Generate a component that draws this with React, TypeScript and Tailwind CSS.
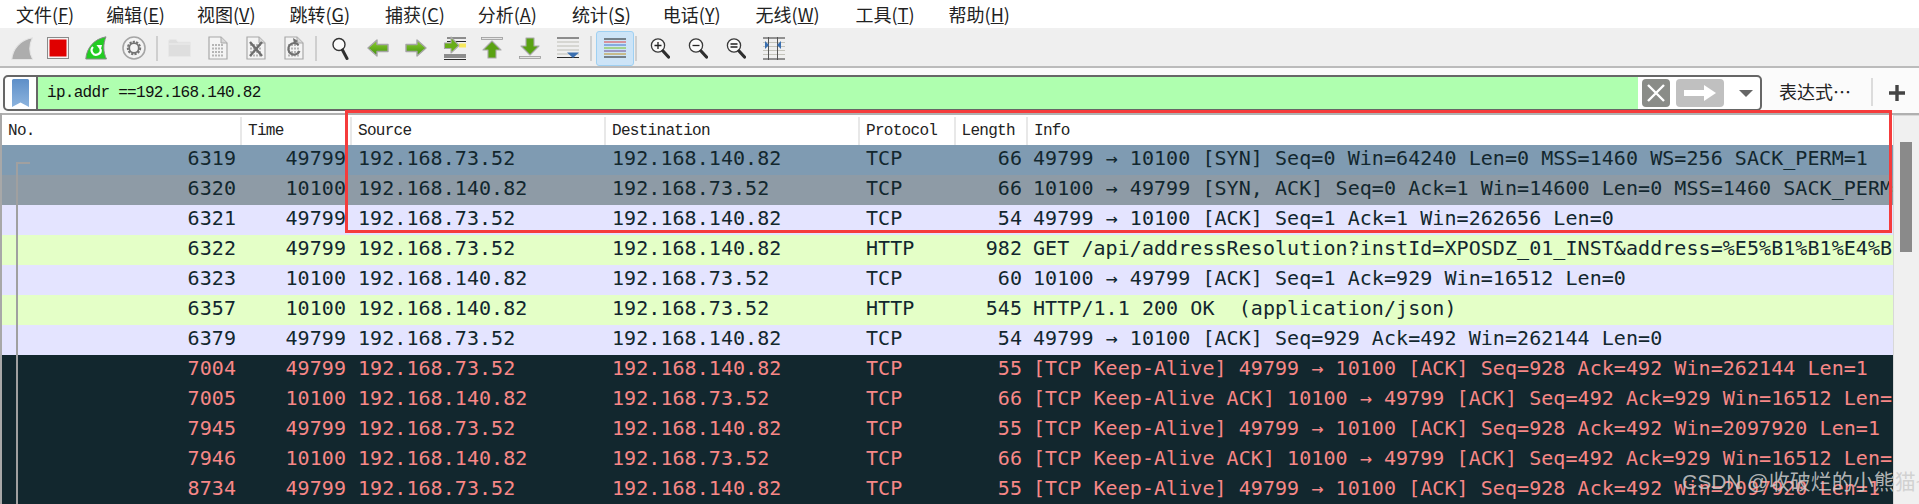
import React from "react";

const MENU: [string, string, string][] = [
  ["文件", "F", "ml-[16px]"],
  ["编辑", "E", "ml-[32px]"],
  ["视图", "V", "ml-[32px]"],
  ["跳转", "G", "ml-[34px]"],
  ["捕获", "C", "ml-[35px]"],
  ["分析", "A", "ml-[33px]"],
  ["统计", "S", "ml-[35px]"],
  ["电话", "Y", "ml-[32px]"],
  ["无线", "W", "ml-[35px]"],
  ["工具", "T", "ml-[36px]"],
  ["帮助", "H", "ml-[34px]"],
];

const A = "192.168.73.52";
const B = "192.168.140.82";
type Row = [number, number, string, string, string, number, string, string];
const S1 = "bg-[#7f9bb2] text-[#12272e]";
const S2 = "bg-[#8e9ba6] text-[#12272e]";
const T = "bg-[#e4e4ff] text-[#12272e]";
const H = "bg-[#e4ffc7] text-[#12272e]";
const D = "bg-[#12272e] text-[#f78787]";
const ROWS: Row[] = [
  [6319, 49799, A, B, "TCP", 66, "49799 → 10100 [SYN] Seq=0 Win=64240 Len=0 MSS=1460 WS=256 SACK_PERM=1", S1],
  [6320, 10100, B, A, "TCP", 66, "10100 → 49799 [SYN, ACK] Seq=0 Ack=1 Win=14600 Len=0 MSS=1460 SACK_PERM=1", S2],
  [6321, 49799, A, B, "TCP", 54, "49799 → 10100 [ACK] Seq=1 Ack=1 Win=262656 Len=0", T],
  [6322, 49799, A, B, "HTTP", 982, "GET /api/addressResolution?instId=XPOSDZ_01_INST&address=%E5%B1%B1%E4%B8%9C", H],
  [6323, 10100, B, A, "TCP", 60, "10100 → 49799 [ACK] Seq=1 Ack=929 Win=16512 Len=0", T],
  [6357, 10100, B, A, "HTTP", 545, "HTTP/1.1 200 OK  (application/json)", H],
  [6379, 49799, A, B, "TCP", 54, "49799 → 10100 [ACK] Seq=929 Ack=492 Win=262144 Len=0", T],
  [7004, 49799, A, B, "TCP", 55, "[TCP Keep-Alive] 49799 → 10100 [ACK] Seq=928 Ack=492 Win=262144 Len=1", D],
  [7005, 10100, B, A, "TCP", 66, "[TCP Keep-Alive ACK] 10100 → 49799 [ACK] Seq=492 Ack=929 Win=16512 Len=0", D],
  [7945, 49799, A, B, "TCP", 55, "[TCP Keep-Alive] 49799 → 10100 [ACK] Seq=928 Ack=492 Win=2097920 Len=1", D],
  [7946, 10100, B, A, "TCP", 66, "[TCP Keep-Alive ACK] 10100 → 49799 [ACK] Seq=492 Ack=929 Win=16512 Len=0", D],
  [8734, 49799, A, B, "TCP", 55, "[TCP Keep-Alive] 49799 → 10100 [ACK] Seq=928 Ack=492 Win=2097920 Len=1", D],
];

const COLS = "grid grid-cols-[240px_110px_254px_254px_95.5px_72.5px_1fr]";

const Sep = ({ c }: { c: string }) => <div className={`${c} w-[2px] h-[25px] bg-[#cfcfcf] shrink-0`} />;

const Page = ({ children }: { children?: React.ReactNode }) => (
  <svg width="20" height="24" viewBox="0 0 20 24" className="shrink-0">
    <path d="M1 1H13L19 7V23H1Z" fill="#f4f4f4" stroke="#a8a8a8" strokeWidth="1.2" />
    <path d="M13 1V7H19" fill="#d8d8d8" stroke="#a8a8a8" strokeWidth="1" />
    {[9, 12.5, 16, 19.5].map((y) => (
      <path key={y} d={`M4 ${y}H16`} stroke="#b5b5b5" strokeWidth="1.8" strokeDasharray="2 1" />
    ))}
    {children}
  </svg>
);

const Arrow = ({ dir, id }: { dir: "l" | "r"; id: string }) => (
  <svg width="22" height="18" viewBox="0 0 22 18" className="shrink-0">
    <defs>
      <linearGradient id={id} x1="0" y1="0" x2="0" y2="1">
        <stop offset="0" stopColor="#8fd030" />
        <stop offset="1" stopColor="#3f8f0c" />
      </linearGradient>
    </defs>
    <path
      d={dir === "l" ? "M1 9L10 1V5.5H21V12.5H10V17Z" : "M21 9L12 1V5.5H1V12.5H12V17Z"}
      fill={`url(#${id})`}
      stroke="#a5a5a5"
      strokeWidth="1.4"
      strokeLinejoin="round"
    />
  </svg>
);

const Mag = ({ sign }: { sign?: "+" | "-" | "=" }) => (
  <svg width="20" height="22" viewBox="0 0 20 22" className="shrink-0">
    <circle cx="8" cy="8.5" r="6.6" fill="#fafafa" stroke="#3a3a3a" strokeWidth="1.3" />
    <path d="M13 14L18.5 20" stroke="#2e2e2e" strokeWidth="3.2" strokeLinecap="round" />
    {sign === "+" && <path d="M4.5 8.5H11.5M8 5V12" stroke="#222" strokeWidth="1.3" />}
    {sign === "-" && <path d="M4.5 8.5H11.5" stroke="#222" strokeWidth="1.3" />}
    {sign === "=" && <path d="M4.5 7H11.5M4.5 10H11.5" stroke="#222" strokeWidth="1.3" />}
  </svg>
);

const Toolbar = () => (
  <div className="h-[36px] bg-[#efefef] flex items-center shrink-0 relative">
    {/* shark */}
    <svg width="22" height="23" viewBox="0 0 22 23" className="ml-[11px] shrink-0">
      <path d="M0.8 22.5C1.5 12 9 3 21.5 0.8C18 8 18 16 21.8 22.5Z" fill="#adadad" stroke="#e4e4e4" strokeWidth="1.1" />
    </svg>
    {/* stop */}
    <svg width="22" height="22" viewBox="0 0 22 22" className="ml-[14px] shrink-0">
      <rect x="0.5" y="0.5" width="21" height="21" fill="#f4f4f4" stroke="#8a8a8a" />
      <rect x="2.5" y="2.5" width="17" height="17" fill="#e00000" />
    </svg>
    {/* restart */}
    <svg width="22" height="24" viewBox="0 0 22 24" className="ml-[16px] shrink-0">
      <path d="M0.8 23C1.5 12 9 3 21 0.8C18 8 18 16 21.5 23Z" fill="#22cc22" stroke="#8a8a8a" strokeWidth="1" />
      <path d="M15.5 13A4.5 4.5 0 1 1 8 11" fill="none" stroke="#fff" strokeWidth="2.2" />
      <path d="M11.5 9L17 9L15.5 14.5Z" fill="#fff" />
    </svg>
    {/* gear */}
    <svg width="24" height="24" viewBox="0 0 24 24" className="ml-[15px] shrink-0">
      <circle cx="12" cy="12" r="11" fill="#f4f4f4" stroke="#a5a5a5" strokeWidth="1.6" />
      <circle cx="12" cy="12" r="6.2" fill="none" stroke="#737373" strokeWidth="2" strokeDasharray="2.2 1.2" />
      <circle cx="12" cy="12" r="4.8" fill="none" stroke="#737373" strokeWidth="1.8" />
    </svg>
    <Sep c="ml-[10px]" />
    {/* folder */}
    <svg width="23" height="18" viewBox="0 0 23 18" className="ml-[10px] shrink-0">
      <path d="M0.5 2.5Q0.5 0.5 2.5 0.5H8L10 3H22.5V17.5H0.5Z" fill="#dedede" stroke="#e8e8e8" />
      <path d="M1 5H22" stroke="#eeeeee" />
    </svg>
    <div className="ml-[17px] shrink-0 flex"><Page /></div>
    <div className="ml-[18px] shrink-0 flex">
      <Page>
        <path d="M4 6L16 20M16 6L4 20" stroke="#6e6e6e" strokeWidth="2.4" />
      </Page>
    </div>
    <div className="ml-[18px] shrink-0 flex">
      <Page>
        <path d="M14.5 9A5.8 5.8 0 1 0 15.5 15" fill="none" stroke="#707070" strokeWidth="2.2" />
        <path d="M9 2L14 5L10 8Z" fill="#707070" />
      </Page>
    </div>
    <Sep c="ml-[11px]" />
    {/* search */}
    <svg width="17" height="23" viewBox="0 0 17 23" className="ml-[15px] shrink-0">
      <circle cx="7" cy="7.5" r="6" fill="#fbfbfb" stroke="#333" strokeWidth="1.4" />
      <path d="M10.5 13L15 21.5" stroke="#2e2e2e" strokeWidth="3" strokeLinecap="round" />
    </svg>
    <div className="ml-[18px] shrink-0 flex"><Arrow dir="l" id="a1" /></div>
    <div className="ml-[16px] shrink-0 flex"><Arrow dir="r" id="a2" /></div>
    {/* go to packet */}
    <svg width="24" height="24" viewBox="0 0 24 24" className="ml-[16px] shrink-0">
      <path d="M4 2H23M4 5.5H23M1 19H23M1 21H23M1 23.5H23" stroke="#2a2a2a" strokeWidth="1" />
      <rect x="16" y="7.5" width="7" height="4" fill="#f7e85c" />
      <path d="M1.5 7H8V1L16 9.5L8 17V12.5H1.5Z" fill="#68ae18" stroke="#a9a9a9" strokeWidth="1.1" strokeLinejoin="round" />
    </svg>
    {/* first */}
    <svg width="22" height="22" viewBox="0 0 22 22" className="ml-[14px] shrink-0">
      <rect x="0.5" y="0.5" width="21" height="2" fill="#e4e4e4" stroke="#9a9a9a" strokeWidth="0.8" />
      <path d="M11 4L20 13H15V21H7V13H2Z" fill="#5aa213" stroke="#a9a9a9" strokeWidth="1.1" strokeLinejoin="round" />
    </svg>
    {/* last */}
    <svg width="22" height="22" viewBox="0 0 22 22" className="ml-[16px] shrink-0">
      <rect x="0.5" y="19.5" width="21" height="2" fill="#e4e4e4" stroke="#9a9a9a" strokeWidth="0.8" />
      <path d="M11 18L20 9H15V1H7V9H2Z" fill="#5aa213" stroke="#a9a9a9" strokeWidth="1.1" strokeLinejoin="round" />
    </svg>
    {/* autoscroll */}
    <svg width="22" height="22" viewBox="0 0 22 22" className="ml-[16px] shrink-0">
      <path d="M0 1H22M0 20.5H22" stroke="#2a2a2a" strokeWidth="1" />
      <path d="M0 5H22M0 9H22M0 13H22M0 17H22" stroke="#bdbdb5" strokeWidth="1" />
      <path d="M10 15.5H22L16 21Z" fill="#3a6fb0" />
    </svg>
    <Sep c="ml-[11px]" />
    {/* colorize */}
    <div className="ml-[4px] w-[38px] h-[35px] bg-[#cde4f7] border border-[#9fd0f2] rounded-[3px] flex items-center justify-center shrink-0">
      <svg width="22" height="22" viewBox="0 0 22 22">
        <path d="M0 2H22" stroke="#1c1c1c" strokeWidth="1" />
        <path d="M0 5H22" stroke="#e04040" strokeWidth="1" />
        <path d="M0 8H22" stroke="#4070c8" strokeWidth="1" />
        <path d="M0 11H22" stroke="#7ac020" strokeWidth="1" />
        <path d="M0 14H22" stroke="#6a4a90" strokeWidth="1" />
        <path d="M0 17H22" stroke="#c09020" strokeWidth="1" />
        <path d="M0 20H22" stroke="#1c1c1c" strokeWidth="1" />
      </svg>
    </div>
    <Sep c="ml-[1px]" />
    <div className="ml-[13px] shrink-0 flex"><Mag sign="+" /></div>
    <div className="ml-[18px] shrink-0 flex"><Mag sign="-" /></div>
    <div className="ml-[18px] shrink-0 flex"><Mag sign="=" /></div>
    {/* resize columns */}
    <svg width="22" height="23" viewBox="0 0 22 23" className="ml-[17px] shrink-0">
      <path d="M0 1H22M0 22H22" stroke="#333" strokeWidth="1" />
      <path d="M0 5.5H22M0 9.5H22M0 13.5H22M0 17.5H22" stroke="#c4c4bc" strokeWidth="1" />
      <path d="M5.5 0V23M14.5 0V23" stroke="#555" strokeWidth="1" />
      <path d="M2 4L6 8L2 12Z" fill="#3a6fb0" />
      <path d="M18 4L14 8L18 12Z" fill="#3a6fb0" />
    </svg>
  </div>
);

const FilterBar = () => (
  <div className="h-[43px] bg-[#fbfbfb] flex items-start pt-[5px] pl-[3px] shrink-0">
    <div className="w-[1759px] h-[36px] rounded-[5px] border-2 border-[#666] flex overflow-hidden bg-white">
      <div className="w-[33px] border-r-2 border-[#666] flex items-center justify-center shrink-0">
        <svg width="17" height="28" viewBox="0 0 17 28">
          <defs>
            <linearGradient id="bm" x1="0" y1="0" x2="0" y2="1">
              <stop offset="0" stopColor="#5e8fc8" />
              <stop offset="1" stopColor="#8db4de" />
            </linearGradient>
          </defs>
          <path d="M1.5 0H15.5Q17 0 17 1.5V28L8.5 23.5L0 28V1.5Q0 0 1.5 0Z" fill="url(#bm)" />
        </svg>
      </div>
      <div className="w-[1600px] bg-[#afffaf] flex items-center pl-[9px] text-[16px] tracking-[-0.7px] text-[#111] [font-family:'Liberation_Mono',monospace] shrink-0">
        ip.addr ==192.168.140.82
      </div>
      <div className="flex items-center flex-1 pl-[4px]">
        <div className="w-[28px] h-[28px] rounded-[4px] bg-[#8a8c88] flex items-center justify-center shrink-0">
          <svg width="20" height="20" viewBox="0 0 20 20">
            <path d="M2 2L18 18M18 2L2 18" stroke="#fff" strokeWidth="2.4" />
          </svg>
        </div>
        <div className="ml-[6px] w-[48px] h-[28px] rounded-[4px] bg-[#c0c0c0] flex items-center justify-center shrink-0">
          <svg width="34" height="18" viewBox="0 0 34 18">
            <path d="M1 6H21V1L33 9L21 17V12H1Z" fill="#fff" />
          </svg>
        </div>
        <div className="ml-[15px] w-0 h-0 border-x-[7px] border-x-transparent border-t-[7px] border-t-[#666] shrink-0" />
      </div>
    </div>
    <div className="ml-[17px] mt-[2px] text-[18px] text-[#222] leading-[28px] [font-family:'Noto_Sans_CJK_SC',sans-serif] whitespace-nowrap">表达式…</div>
    <div className="ml-[20px] mt-[3px] w-[2px] h-[28px] bg-[#dcdcdc]" />
    <svg width="16" height="16" viewBox="0 0 16 16" className="ml-[16px] mt-[10px]">
      <path d="M8 0V16M0 8H16" stroke="#444" strokeWidth="3.4" />
    </svg>
  </div>
);

const HEAD = ["No.", "Time", "Source", "Destination", "Protocol", "Length", "Info"];

export default function App() {
  return (
    <div className="w-[1919px] h-[504px] bg-white overflow-hidden relative flex flex-col">
      <div className="h-[28px] flex items-center text-[18px] text-[#222] [font-family:'Noto_Sans_CJK_SC',sans-serif] whitespace-nowrap shrink-0">
        {MENU.map(([t, k, c]) => (
          <span key={k} className={c}>
            {t}(<span className="underline underline-offset-1">{k}</span>)
          </span>
        ))}
      </div>
      <div className="h-[2px] bg-[#f0f0f0] shrink-0" />
      <Toolbar />
      <div className="h-[2px] bg-[#bbbbbb] shrink-0" />
      <div className="h-[2px] bg-[#fbfbfb] shrink-0" />
      <FilterBar />
      <div className="h-[2px] bg-[#b0b0b0] shrink-0" />
      <div className="flex flex-1 min-h-0 pl-[2px] relative">
        <div className="flex-1 min-w-0 flex flex-col">
          <div className={`${COLS} h-[30px] bg-white text-[16px] tracking-[-0.7px] text-[#222] pt-[2px] [font-family:'Liberation_Mono',monospace] shrink-0`}>
            {HEAD.map((h, i) => (
              <div key={h} className={`flex items-center pl-[6px] ${i < 6 ? "border-r-2 border-[#e8e8e8]" : ""}`}>{h}</div>
            ))}
          </div>
          {ROWS.map((r) => (
            <div key={r[0]} className={`${COLS} h-[30px] shrink-0 items-center text-[20px] tracking-[0.06px] leading-[26px] pb-[4px] whitespace-pre [font-family:'DejaVu_Sans_Mono',monospace] ${r[7]}`}>
              <div className="text-right pr-[6px]">{r[0]}</div>
              <div className="text-right pr-[6px]">{r[1]}</div>
              <div className="pl-[6px]">{r[2]}</div>
              <div className="pl-[6px]">{r[3]}</div>
              <div className="pl-[6px]">{r[4]}</div>
              <div className="text-right pr-[6px]">{r[5]}</div>
              <div className="pl-[5px] overflow-hidden">{r[6]}</div>
            </div>
          ))}
        </div>
        <div className="w-[26px] bg-[#f0f0f0] border-t border-l border-[#d8d8d8] shrink-0 pt-[26px] pl-[6px]">
          <div className="w-[12px] h-[110px] bg-[#8a8a8a]" />
        </div>
        {/* conversation marker */}
        <div className="absolute left-[16px] top-[47px] w-[14px] h-[400px] border-l-2 border-t-2 border-[#a0a0a0]" />
      </div>
      <div className="absolute left-0 top-[113px] w-[2px] h-[391px] bg-[#a8a8a8]" />
      {/* annotation */}
      <div className="absolute left-[345px] top-[110px] w-[1547px] h-[123px] border-y-[3px] border-x-[3px] border-[#f53c3c]" />
      {/* watermark */}
      <div className="absolute left-[1682px] top-[468px] text-[21px] leading-[28px] text-[#cccccc]/85 whitespace-nowrap [font-family:'Liberation_Sans','Noto_Sans_CJK_SC',sans-serif]">CSDN @收破烂的小熊猫~</div>
    </div>
  );
}
